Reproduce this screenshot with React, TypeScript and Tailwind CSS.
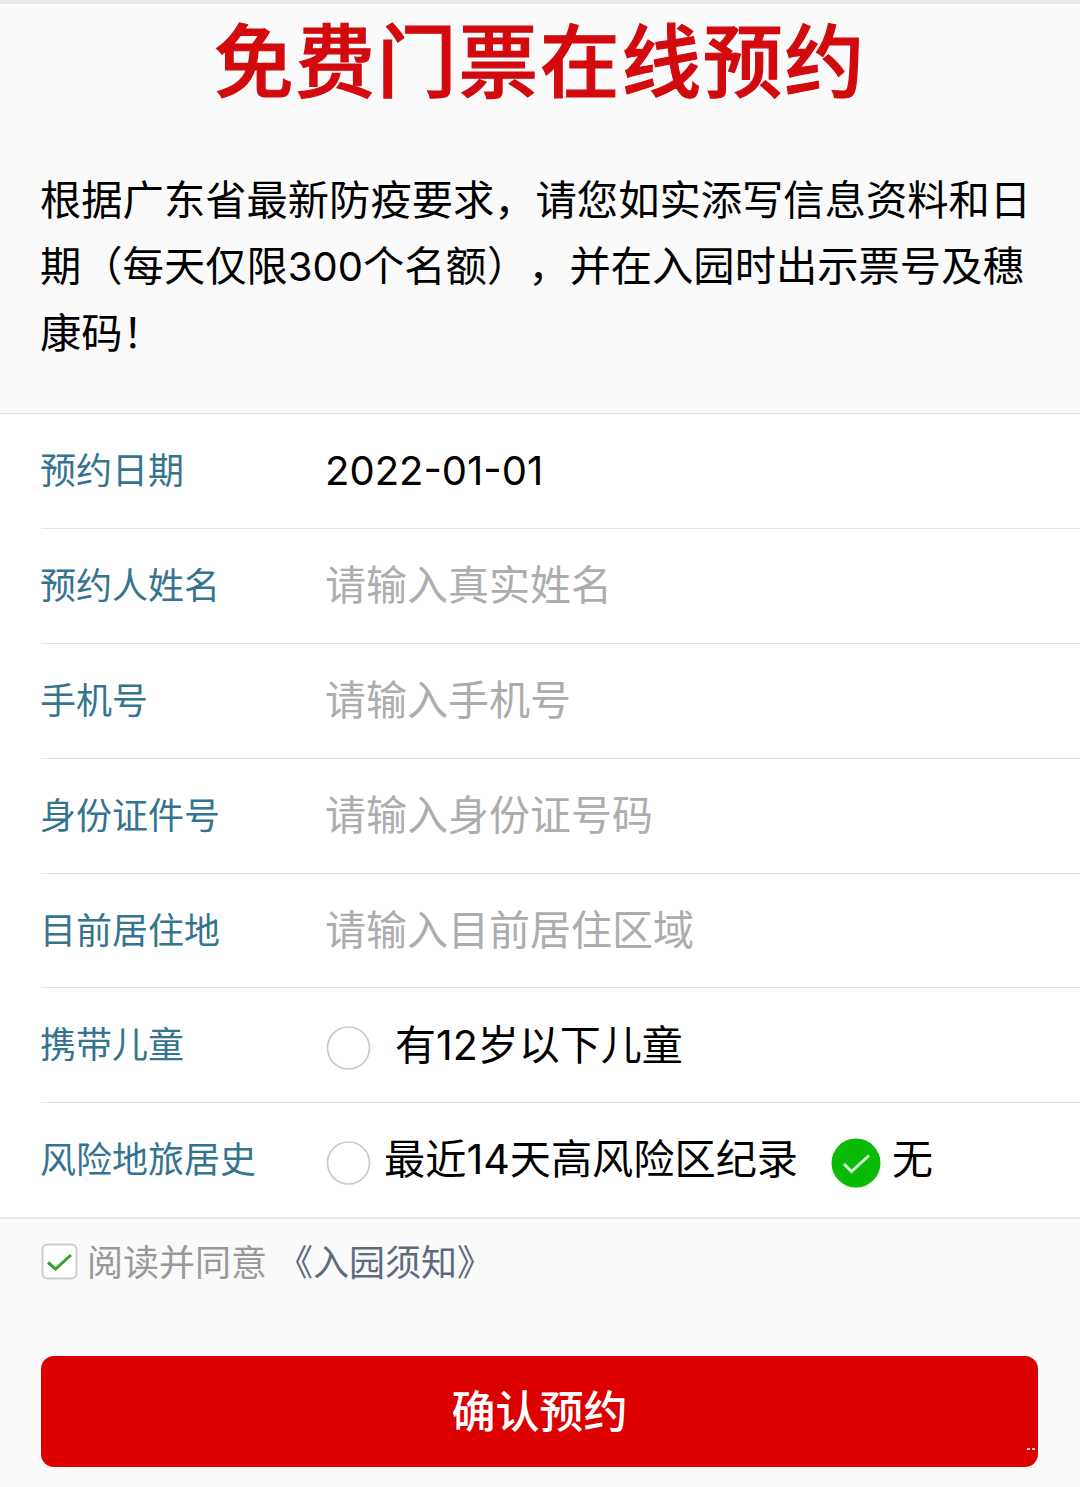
import React, { useState } from 'react';

const fields = [
  { label: '预约日期', value: '2022-01-01' },
  { label: '预约人姓名', placeholder: '请输入真实姓名' },
  { label: '手机号', placeholder: '请输入手机号' },
  { label: '身份证件号', placeholder: '请输入身份证号码' },
  { label: '目前居住地', placeholder: '请输入目前居住区域' },
];

const Row: React.FC<{ label: string; last?: boolean; children: React.ReactNode }> = ({ label, last, children }) => (
  <div className={`ml-[41px] flex items-center whitespace-nowrap ${last ? 'h-[113.6px]' : 'h-[114.9px] border-b border-[#e2e2e2]'}`}>
    <div className="-ml-px w-[285px] shrink-0 text-[36px] text-[#35748f]">{label}</div>
    {children}
  </div>
);

const Radio: React.FC<{ checked: boolean; onClick: () => void }> = ({ checked, onClick }) => (
  <button onClick={onClick} className="shrink-0 mt-[5px]">
    {checked ? (
      <svg width="50" height="50" viewBox="0 0 50 50" className="block">
        <circle cx="25" cy="25" r="24.5" fill="#09bb07" />
        <path d="M13 26 L20.5 33.5 L38 17.5" fill="none" stroke="#d5f7d0" strokeWidth="3" />
      </svg>
    ) : (
      <svg width="46" height="46" viewBox="0 0 46 46" className="block">
        <circle cx="23.5" cy="23" r="21" fill="#fff" stroke="#c9c9c9" strokeWidth="1.7" />
      </svg>
    )}
  </button>
);

const App: React.FC = () => {
  const [children, setChildren] = useState(false);
  const [risk, setRisk] = useState(false);
  const [agreed, setAgreed] = useState(true);

  return (
    <div className="w-[1080px] h-[1487px] overflow-hidden bg-[#fafafa] text-black font-['Inter','Noto_Sans_CJK_SC',sans-serif] [text-spacing-trim:space-all]" lang="zh-CN">
      <header className="h-[413px] border-t-4 border-[#e9e9e9]">
        <h1 className="h-[117px] flex items-center justify-center text-[79.5px] tracking-[2px] leading-none font-medium text-[#d20a0e] [-webkit-text-stroke:1.2px_#d20a0e]">
          免费门票在线预约
        </h1>
        <p className="mt-[46px] ml-[40px] text-[41.3px] leading-[66px] whitespace-nowrap">
          根据广东省最新防疫要求，请您如实添写信息资料和日
          <br />
          期（每天仅限<span className="text-[40px]">300</span>个名额），并在入园时出示票号及穗
          <br />
          康码！
        </p>
      </header>

      <main className="bg-white border-t border-b-2 border-t-[#dedede] border-b-[#e8e8e8]">
        {fields.map((f) => (
          <Row key={f.label} label={f.label}>
            {f.value ? (
              <span className="text-[40px]">{f.value}</span>
            ) : (
              <span className="text-[41px] text-[#adadad]">{f.placeholder}</span>
            )}
          </Row>
        ))}
        <Row label="携带儿童">
          <Radio checked={children} onClick={() => setChildren(!children)} />
          <span className="ml-[24px] text-[41px]">有12岁以下儿童</span>
        </Row>
        <Row label="风险地旅居史" last>
          <Radio checked={risk} onClick={() => setRisk(true)} />
          <span className="ml-[13px] text-[41.2px]">最近14天高风险区纪录</span>
          <span className="w-[33px]" />
          <Radio checked={!risk} onClick={() => setRisk(false)} />
          <span className="ml-[11px] text-[41px]">无</span>
        </Row>
      </main>

      <footer className="px-[41px]">
        <div className="h-[88px] flex items-center text-[36px]">
          <button onClick={() => setAgreed(!agreed)} className="shrink-0 -mt-[2px]">
            <svg width="37" height="37" viewBox="0 0 37 37" className="block">
              <rect x="1.5" y="1.5" width="34" height="34" rx="5" fill="#fff" stroke="#cdcdcd" strokeWidth="2" />
              {agreed && <path d="M7 19.5 L14.5 26 L30 12" fill="none" stroke="#2fa32f" strokeWidth="3" />}
            </svg>
          </button>
          <span className="ml-[9px] text-[#999]">阅读并同意</span>
          <a className="ml-[10px] text-[#5f6b7d]">《入园须知》</a>
        </div>
        <button className="relative mt-[49px] w-[997px] h-[111px] pt-[2px] rounded-[13px] bg-[#dc0000] text-white text-[44px] font-medium">
          确认预约
          <span className="absolute right-[3px] bottom-[17px] flex gap-[2px]">
            <i className="w-[3px] h-[2px] bg-[#ffd9d0]" />
            <i className="w-[3px] h-[2px] bg-[#ffd9d0]" />
          </span>
        </button>
      </footer>
    </div>
  );
};

export default App;
